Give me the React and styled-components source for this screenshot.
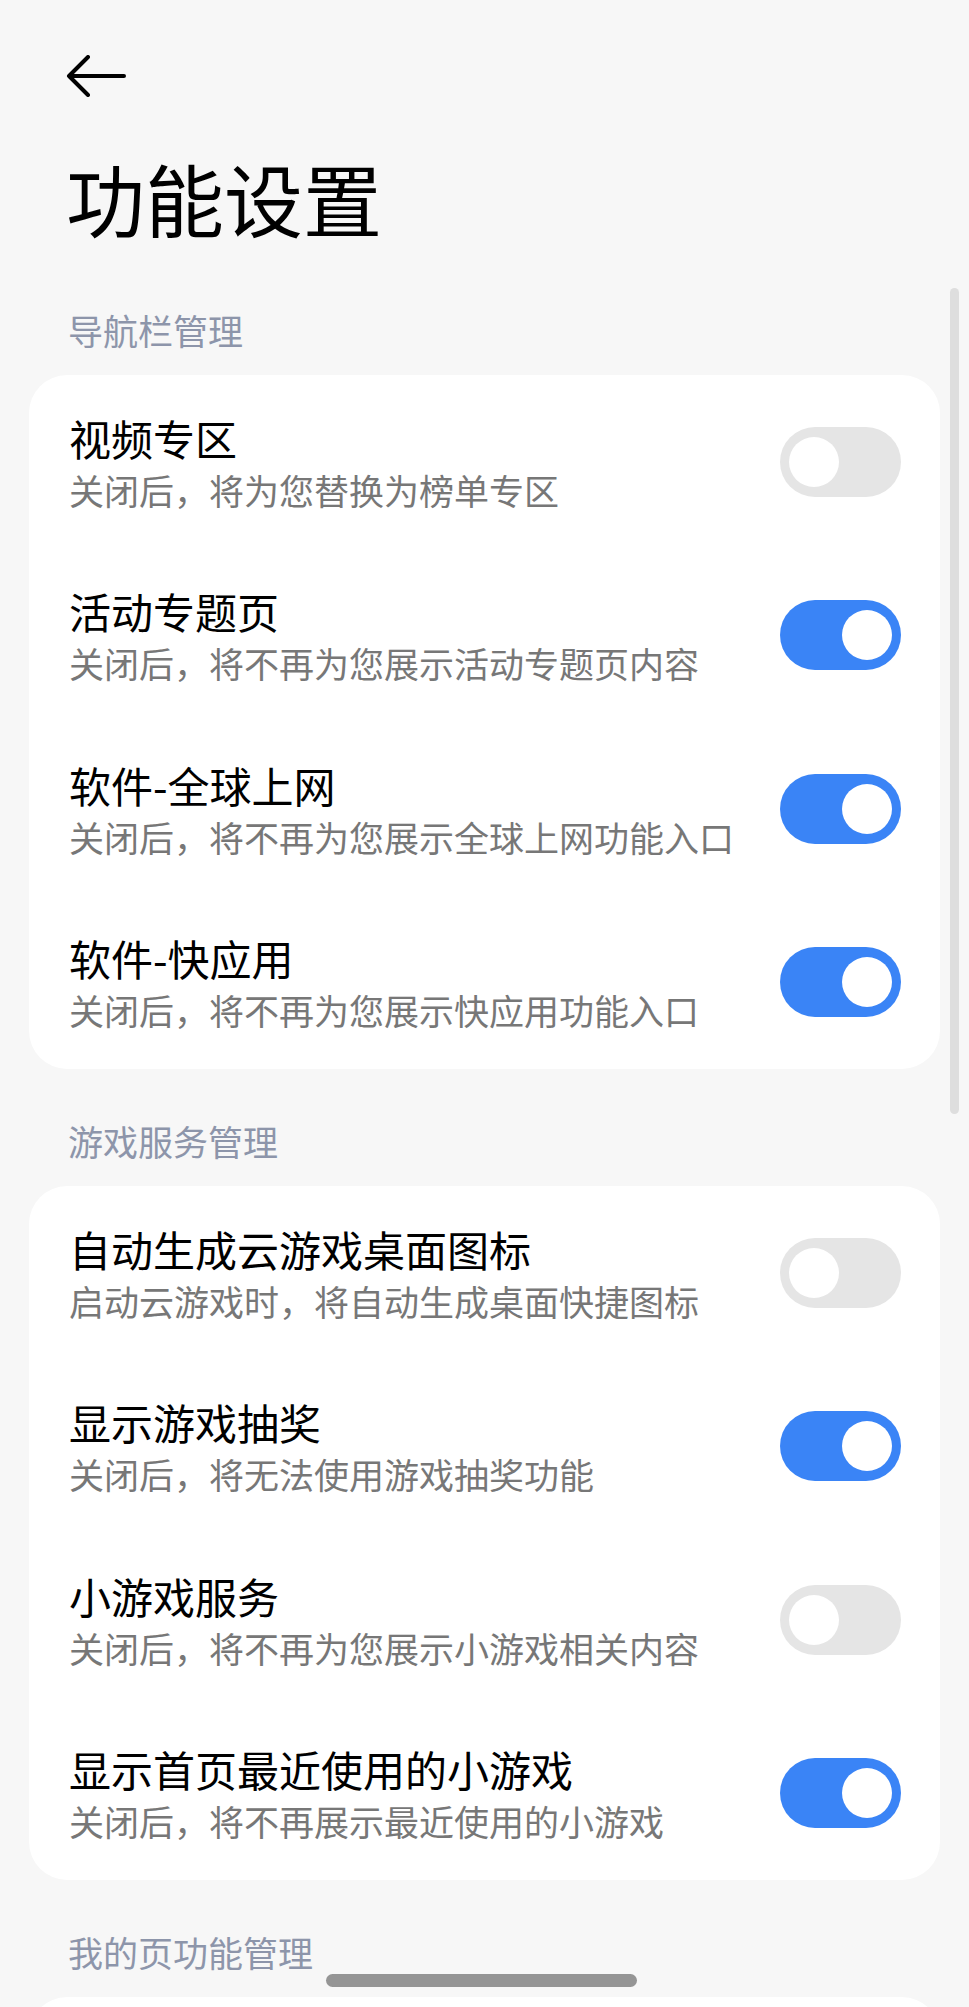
import React from 'react'
import styled, { createGlobalStyle } from 'styled-components'

const GlobalStyle = createGlobalStyle`
  html, body {
    margin: 0;
    padding: 0;
    background: #f7f7f7;
  }
  body {
    font-family: 'Noto Sans CJK SC', 'Noto Sans', sans-serif;
  }
`

const Page = styled.main`
  position: relative;
  width: 969px;
  height: 2007px;
  overflow: hidden;
  background: #f7f7f7;
`

const TopBar = styled.div`
  display: flex;
  align-items: center;
  padding: 56px 0 0 66px;
  height: 40px;
`

const BackButton = styled.button`
  display: flex;
  padding: 0;
  border: 0;
  background: none;
  cursor: pointer;
`

const PageTitle = styled.h1`
  margin: 63px 0 0;
  padding-left: 66px;
  font-size: 79px;
  line-height: 78px;
  font-weight: 400;
  color: #000;
`

const SectionHeader = styled.h2`
  margin: ${props => props.first ? '71px' : '50px'} 0 0;
  padding-left: 68px;
  font-size: 35px;
  line-height: 44px;
  font-weight: 400;
  color: #8d95aa;
`

const Card = styled.section`
  margin: 23px 29px 0;
  background: #fff;
  border-radius: 38px;
  min-height: ${props => props.empty ? '200px' : 'auto'};
`

const Row = styled.div`
  display: flex;
  align-items: center;
  justify-content: space-between;
  height: 173.5px;
  padding: 0 39px 0 40px;
  box-sizing: border-box;
`

const RowText = styled.div`
  display: flex;
  flex-direction: column;
  gap: 6px;
  padding-top: 2px;
`

const RowTitle = styled.div`
  font-size: 42px;
  line-height: 48px;
  color: #000;
`

const RowSub = styled.div`
  font-size: 35px;
  line-height: 44px;
  color: #777;
`

const Track = styled.div`
  flex: none;
  width: 121px;
  height: 70px;
  border-radius: 35px;
  background: ${props => props.on ? '#3a84f6' : '#e5e5e5'};
  display: flex;
  align-items: center;
  justify-content: ${props => props.on ? 'flex-end' : 'flex-start'};
  padding: 0 9px;
  box-sizing: border-box;
`

const Knob = styled.div`
  width: 50px;
  height: 50px;
  border-radius: 50%;
  background: #fff;
`

const ScrollThumb = styled.div`
  position: absolute;
  left: 950px;
  top: 288px;
  width: 9px;
  height: 826px;
  border-radius: 5px;
  background: #dedede;
`

const HomeIndicator = styled.div`
  position: absolute;
  left: 326px;
  top: 1974px;
  width: 311px;
  height: 13px;
  border-radius: 7px;
  background: #959595;
`

const sections = [
  {
    title: '导航栏管理',
    items: [
      { title: '视频专区', sub: '关闭后，将为您替换为榜单专区', on: false },
      { title: '活动专题页', sub: '关闭后，将不再为您展示活动专题页内容', on: true },
      { title: '软件-全球上网', sub: '关闭后，将不再为您展示全球上网功能入口', on: true },
      { title: '软件-快应用', sub: '关闭后，将不再为您展示快应用功能入口', on: true },
    ],
  },
  {
    title: '游戏服务管理',
    items: [
      { title: '自动生成云游戏桌面图标', sub: '启动云游戏时，将自动生成桌面快捷图标', on: false },
      { title: '显示游戏抽奖', sub: '关闭后，将无法使用游戏抽奖功能', on: true },
      { title: '小游戏服务', sub: '关闭后，将不再为您展示小游戏相关内容', on: false },
      { title: '显示首页最近使用的小游戏', sub: '关闭后，将不再展示最近使用的小游戏', on: true },
    ],
  },
  {
    title: '我的页功能管理',
    items: [],
  },
]

function BackArrow () {
  return (
    <svg width="60" height="42" viewBox="0 0 60 42" fill="none">
      <path d="M58 21H3M22 2L3 21l19 19" stroke="#000" strokeWidth="4" strokeLinecap="round" strokeLinejoin="round" />
    </svg>
  )
}

export default function App () {
  return (
    <Page>
      <GlobalStyle />
      <TopBar>
        <BackButton aria-label="返回"><BackArrow /></BackButton>
      </TopBar>
      <PageTitle>功能设置</PageTitle>
      {sections.map((section, i) => (
        <div key={section.title}>
          <SectionHeader first={i === 0}>{section.title}</SectionHeader>
          <Card empty={section.items.length === 0}>
            {section.items.map(item => (
              <Row key={item.title}>
                <RowText>
                  <RowTitle>{item.title}</RowTitle>
                  <RowSub>{item.sub}</RowSub>
                </RowText>
                <Track on={item.on}><Knob /></Track>
              </Row>
            ))}
          </Card>
        </div>
      ))}
      <ScrollThumb />
      <HomeIndicator />
    </Page>
  )
}
